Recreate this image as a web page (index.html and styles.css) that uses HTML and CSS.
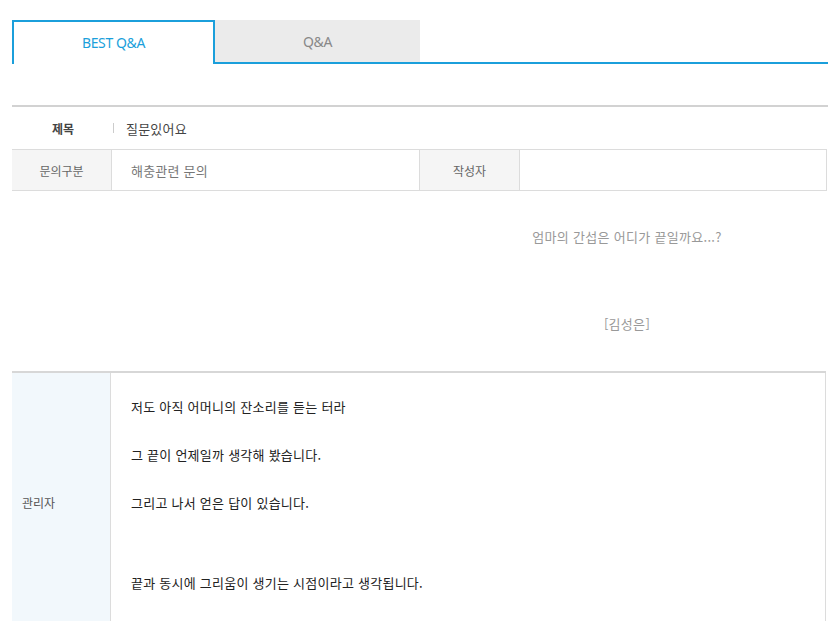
FILE: index.html
```html
<!DOCTYPE html>
<html lang="ko">
<head>
<meta charset="utf-8">
<title>BEST Q&amp;A</title>
<link rel="stylesheet" href="styles.css">
</head>
<body>
<div class="page">
  <div class="tabs">
    <div class="tab tab-active">BEST Q&amp;A</div>
    <div class="tab tab-off">Q&amp;A</div>
    <div class="tab-fill"></div>
  </div>

  <div class="view">
    <div class="title-row">
      <div class="title-label">제목</div>
      <div class="title-sep"></div>
      <div class="title-text">질문있어요</div>
    </div>
    <div class="info-row">
      <div class="info-th">문의구분</div>
      <div class="info-td info-cat">해충관련 문의</div>
      <div class="info-th">작성자</div>
      <div class="info-td info-writer"></div>
    </div>
    <div class="question">
      <p class="q-text">엄마의 간섭은 어디가 끝일까요...?</p>
      <p class="q-name">[김성은]</p>
    </div>
    <div class="answer">
      <div class="ans-th">관리자</div>
      <div class="ans-td">
        <p>저도 아직 어머니의 잔소리를 듣는 터라</p>
        <p>그 끝이 언제일까 생각해 봤습니다.</p>
        <p>그리고 나서 얻은 답이 있습니다.</p>
        <p class="blank">&nbsp;</p>
        <p>끝과 동시에 그리움이 생기는 시점이라고 생각됩니다.</p>
      </div>
    </div>
  </div>
</div>
</body>
</html>
```

FILE: styles.css
```css
html, body {
  margin: 0;
  padding: 0;
  background: #fff;
}
body {
  font-family: "Noto Sans CJK KR", "Noto Sans", sans-serif;
  font-size: 12px;
  color: #333;
}
p { margin: 0; }

.page {
  padding: 20px 0 0 12px;
}

.tabs {
  display: flex;
  height: 44px;
}
.tab {
  box-sizing: border-box;
  height: 44px;
  display: flex;
  align-items: center;
  justify-content: center;
  font-family: "Noto Sans", sans-serif;
  font-size: 14px;
  letter-spacing: -0.4px;
}
.tab-active {
  width: 203px;
  border: 2px solid #1b9fdb;
  border-bottom: none;
  color: #1b9fdb;
  padding-bottom: 2px;
}
.tab-off {
  width: 205px;
  background: #ebebeb;
  border-bottom: 2px solid #1b9fdb;
  color: #888;
}
.tab-fill {
  flex: 1;
  border-bottom: 2px solid #1b9fdb;
}

.view {
  margin-top: 41px;
  border-top: 2px solid #d2d2d2;
}

.title-row {
  display: flex;
  align-items: center;
  height: 42px;
}
.title-label {
  width: 101px;
  padding-left: 40px;
  box-sizing: border-box;
  font-weight: bold;
  color: #444;
}
.title-sep {
  width: 1px;
  height: 10px;
  background: #ccc;
  margin-right: 12px;
}
.title-text {
  color: #444;
  font-size: 13px;
  letter-spacing: 0.2px;
}

.info-row {
  display: flex;
  height: 42px;
  box-sizing: border-box;
  border-top: 1px solid #dcdcdc;
  border-bottom: 1px solid #dcdcdc;
  margin-right: 1px;
}
.info-th {
  width: 99px;
  background: #f5f5f5;
  border-right: 1px solid #dcdcdc;
  display: flex;
  align-items: center;
  justify-content: center;
  color: #666;
}
.info-td {
  display: flex;
  align-items: center;
  color: #777;
  border-right: 1px solid #dcdcdc;
  font-size: 13px;
  letter-spacing: 0.2px;
}
.info-cat {
  width: 288px;
  padding-left: 19px;
}
.info-writer {
  flex: 1;
}

.question {
  height: 180px;
  box-sizing: border-box;
  padding: 37px 0 0 414px;
  text-align: center;
  color: #999;
  font-size: 13px;
  letter-spacing: 0.3px;
}
.q-text {
  line-height: 18px;
}
.q-name {
  margin-top: 69px;
  line-height: 18px;
}

.answer {
  display: flex;
  border-top: 2px solid #d7d7d7;
  margin-right: 2px;
  min-height: 258px;
}
.ans-th {
  width: 99px;
  background: #f2f8fc;
  border-right: 1px solid #dcdcdc;
  display: flex;
  align-items: center;
  padding-left: 10px;
  box-sizing: border-box;
  color: #555;
}
.ans-td {
  flex: 1;
  border-right: 1px solid #dcdcdc;
  padding: 10px 0 24px 20px;
  color: #222;
  font-size: 13px;
  letter-spacing: 0.25px;
}
.ans-td p {
  line-height: 48px;
  height: 48px;
}
.ans-td p.blank {
  height: 32px;
  line-height: 32px;
}
```
